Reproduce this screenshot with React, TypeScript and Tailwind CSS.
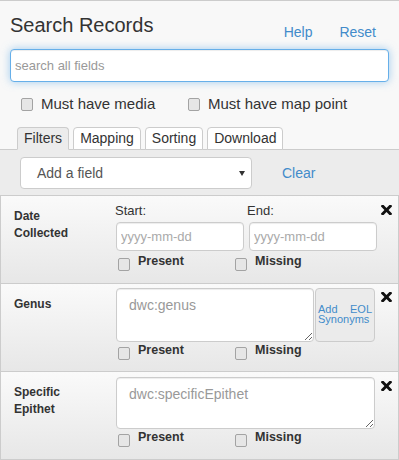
import React from "react";

const Check = ({ className = "" }: { className?: string }) => (
  <span
    className={
      "inline-block w-[12px] h-[13px] shrink-0 rounded-[2px] border border-[#a3a3a3] bg-[#e6e6e6] " +
      className
    }
  />
);

const XIcon = () => (
  <svg width="11" height="10" viewBox="0 96 352 320" className="block">
    <path
      fill="#111"
      d="M242.72 256l100.07-100.07c12.28-12.28 12.28-32.19 0-44.48l-22.24-22.24c-12.28-12.28-32.19-12.28-44.48 0L176 189.28 75.93 89.21c-12.28-12.28-32.19-12.28-44.48 0L9.21 111.45c-12.28 12.28-12.28 32.19 0 44.48L109.28 256 9.21 356.07c-12.28 12.28-12.28 32.19 0 44.48l22.24 22.24c12.28 12.28 32.2 12.28 44.48 0L176 322.72l100.07 100.07c12.28 12.28 32.2 12.28 44.48 0l22.24-22.24c12.28-12.28 12.28-32.19 0-44.48L242.72 256z"
    />
  </svg>
);

const PresentMissing = ({ top }: { top: string }) => (
  <div className={"flex h-[16px] pl-[3px] " + top}>
    <div className="flex w-[117px] items-start">
      <Check className="mt-[5px]" />
      <span className="ml-[8px] text-[12.5px] font-bold leading-[16px] text-[#333]">Present</span>
    </div>
    <div className="flex items-start">
      <Check className="mt-[5px]" />
      <span className="ml-[8px] text-[12.5px] font-bold leading-[16px] text-[#333]">Missing</span>
    </div>
  </div>
);

const Row = ({
  label,
  children,
  xTop,
}: {
  label: React.ReactNode;
  children: React.ReactNode;
  xTop: string;
}) => (
  <div className="flex h-[88px] border-b border-[#ccc] bg-linear-to-b from-[#fafafa] to-[#e7e7e7]">
    <div className="w-[114px] shrink-0 pl-[13px] pt-[12px] text-[12px] font-bold leading-[17px] text-[#333]">
      {label}
    </div>
    <div className="w-[263px] shrink-0">{children}</div>
    <div className={"pl-[3px] " + xTop}>
      <XIcon />
    </div>
  </div>
);

export default function App() {
  return (
    <div
      className="w-[399px] h-[460px] overflow-hidden border-t border-[#ccc] bg-[#f8f8f8] pt-[12px] text-[#333]"
      style={{ fontFamily: '"Liberation Sans", Arial, sans-serif' }}
    >
      {/* Header */}
      <div className="flex h-[36px] pl-[10px] pr-[23px]">
        <h1 className="text-[20px] leading-[24px] font-normal text-[#333]">Search Records</h1>
        <div className="ml-auto mt-[9px] flex gap-[27px] text-[14px] leading-[20px] text-[#428bca]">
          <span>Help</span>
          <span>Reset</span>
        </div>
      </div>

      {/* Search input */}
      <div className="px-[10px]">
        <input
          className="block h-[33px] w-[379px] rounded-[4px] border border-[#66afe9] bg-white px-[4px] text-[13px] text-[#555] outline-none shadow-[inset_0_1px_1px_rgba(0,0,0,0.075),0_0_8px_rgba(102,175,233,0.6)] placeholder:text-[#999]"
          placeholder="search all fields"
        />
      </div>

      {/* Must have checkboxes */}
      <div className="mt-[12px] flex h-[20px] pl-[21px] text-[15px] leading-[20px] text-[#333]">
        <div className="flex w-[167px] items-center">
          <Check />
          <span className="ml-[8px]">Must have media</span>
        </div>
        <div className="flex items-center">
          <Check />
          <span className="ml-[8px]">Must have map point</span>
        </div>
      </div>

      {/* Tabs */}
      <div className="relative z-10 mt-[13px] -mb-px flex h-[23px] gap-[4px] pl-[17px] text-[14px] leading-[21px] text-[#333]">
        <div className="rounded-t-[4px] border border-[#ccc] border-b-[#ececec] bg-[#ececec] px-[6px]">Filters</div>
        <div className="rounded-t-[4px] border border-[#ccc] bg-white px-[6px]">Mapping</div>
        <div className="rounded-t-[4px] border border-[#ccc] bg-white px-[6px]">Sorting</div>
        <div className="rounded-t-[4px] border border-[#ccc] bg-white px-[6px]">Download</div>
      </div>

      {/* Add a field bar */}
      <div className="flex items-center border-t border-[#ccc] bg-[#ececec] pl-[20px] pt-[7px] pb-[6px]">
        <div className="flex h-[32px] w-[232px] items-center justify-between rounded-[4px] border border-[#ccc] bg-white pl-[16px] pr-[6px] text-[14px] text-[#555]">
          <span>Add a field</span>
          <svg width="6" height="5" viewBox="0 0 6 5">
            <polygon points="0,0 6,0 3,5" fill="#333" />
          </svg>
        </div>
        <span className="ml-[30px] text-[14px] text-[#428bca]">Clear</span>
      </div>

      {/* Filter rows */}
      <div className="border-t border-x border-[#ccc]">
        <Row
          label={
            <>
              Date
              <br />
              Collected
            </>
          }
          xTop="pt-[9px]"
        >
          <div className="pt-[7px]">
            <div className="flex text-[13px] leading-[16px] text-[#333]">
              <span className="w-[132px]">Start:</span>
              <span>End:</span>
            </div>
            <div className="mt-[3px] flex gap-[5px] pl-[1px]">
              <input
                className="block h-[29px] w-[128px] rounded-[4px] border border-[#ccc] bg-white px-[4px] text-[13px] outline-none shadow-[inset_0_1px_1px_rgba(0,0,0,0.075)] placeholder:text-[#aaa]"
                placeholder="yyyy-mm-dd"
              />
              <input
                className="block h-[29px] w-[128px] rounded-[4px] border border-[#ccc] bg-white px-[4px] text-[13px] outline-none shadow-[inset_0_1px_1px_rgba(0,0,0,0.075)] placeholder:text-[#aaa]"
                placeholder="yyyy-mm-dd"
              />
            </div>
            <PresentMissing top="mt-[2px]" />
          </div>
        </Row>

        <Row label="Genus" xTop="pt-[8px]">
          <div className="pt-[4px]">
            <div className="flex gap-[1px] pl-[1px]">
              <textarea
                className="block h-[54px] w-[198px] rounded-[4px] border border-[#ccc] bg-white px-[12px] py-[6px] text-[14px] leading-[20px] outline-none shadow-[inset_0_1px_1px_rgba(0,0,0,0.075)] placeholder:text-[#999]"
                placeholder="dwc:genus"
              />
              <div className="flex h-[54px] w-[60px] flex-col justify-center rounded-[4px] border border-[#ccc] bg-[#ebebeb] px-[2px] pb-[3px] text-justify text-[11px] leading-[10px] text-[#428bca]">
                Add EOL Synonyms
              </div>
            </div>
            <PresentMissing top="mt-0" />
          </div>
        </Row>

        <Row
          label={
            <>
              Specific
              <br />
              Epithet
            </>
          }
          xTop="pt-[9px]"
        >
          <div className="pt-[5px]">
            <div className="pl-[1px]">
              <textarea
                className="block h-[52px] w-[259px] rounded-[4px] border border-[#ccc] bg-white px-[12px] py-[6px] text-[14px] leading-[20px] outline-none shadow-[inset_0_1px_1px_rgba(0,0,0,0.075)] placeholder:text-[#999]"
                placeholder="dwc:specificEpithet"
              />
            </div>
            <PresentMissing top="mt-0" />
          </div>
        </Row>
      </div>
    </div>
  );
}
